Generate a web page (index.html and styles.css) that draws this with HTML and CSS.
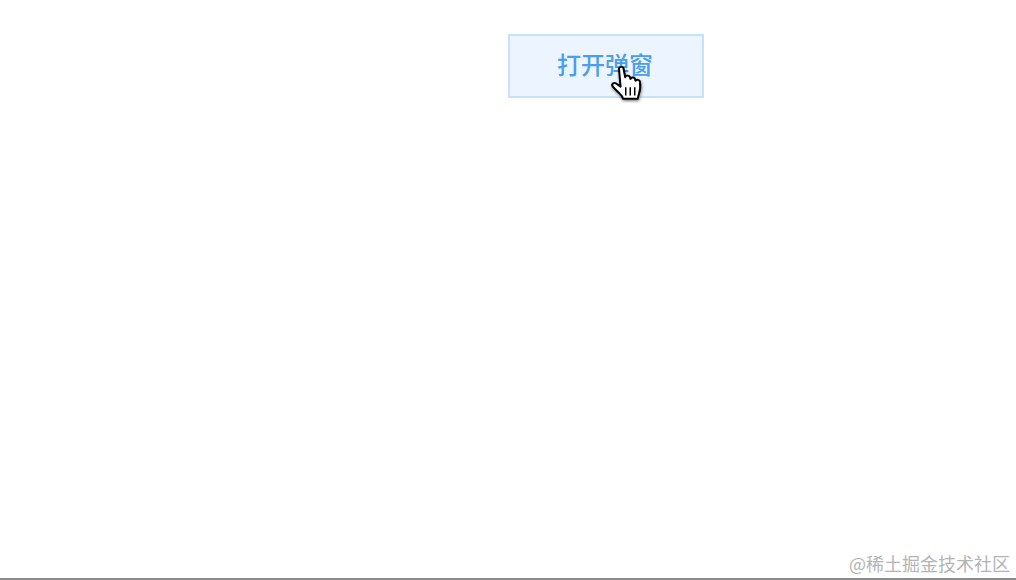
FILE: index.html
```html
<!DOCTYPE html>
<html lang="en">
<head>
    <meta charset="UTF-8">
    <title>打开弹窗</title>
    <link rel="stylesheet" href="styles.css">
</head>
<body>
    <div class="stage">
        <div class="button-wrap">
            <button class="open-button">打开弹窗</button>
            <!-- Mouse pointer caught in the recording -->
            <svg class="hand-cursor" width="36" height="40" viewBox="0 0 32 38" preserveAspectRatio="none">
                <defs>
                    <filter id="cursor-shadow" x="-30%" y="-30%" width="160%" height="160%">
                        <feDropShadow dx="0.5" dy="1.5" stdDeviation="1.2" flood-color="#000" flood-opacity="0.45"/>
                    </filter>
                </defs>
                <path filter="url(#cursor-shadow)" fill="#fff" stroke="#000" stroke-width="1.800" stroke-linejoin="round" d="M8 4.500c0-2.300 3.800-2.300 4.100 0l1.400 8.200c.3-2.300 3.900-2.200 4.300.2l.4 1.300c.5-2 3.900-1.700 4.200.5l.3 1.300c.8-1.700 3.800-1.200 4 1 .4 4.200.1 8.400-.9 11.300-.6 1.800-1 3.100-1.100 4.700H11.600c-.5-2.300-1.700-3.600-3.400-5.300-1.900-1.900-4.300-4.300-5.800-6.400-1.500-2.200 1.100-4.300 3.100-2.800l3.900 3.100z"/>
                <path fill="none" stroke="#000" stroke-width="1.300" d="M14 22v8M18 22v8M22 22v8"/>
            </svg>
        </div>
    </div>
    <div class="watermark">@稀土掘金技术社区</div>
</body>
</html>
```

FILE: styles.css
```css
html,
body {
    margin: 0;
    padding: 0;
    height: 100%;
}

body {
    display: flex;
    flex-direction: column;
    height: 580px;
    box-sizing: border-box;
    overflow: hidden;
    background: #fff;
    border-bottom: 2px solid #8c8c8c;
    font-family: "Noto Sans CJK SC", "Liberation Sans", sans-serif;
}

.stage {
    flex: 1;
    display: flex;
    justify-content: flex-start;
    padding: 34px 0 0 508px;
}

.button-wrap {
    position: relative;
    height: 64px;
}

.open-button {
    width: 196px;
    height: 64px;
    box-sizing: border-box;
    background: #ecf5ff;
    border: 2px solid #c6e2fa;
    color: #4a9eec;
    font-family: inherit;
    font-size: 24px;
    font-weight: 500;
    line-height: 1;
    padding: 0 2px 4px 0;
}

.hand-cursor {
    position: absolute;
    left: 102px;
    top: 30px;
}

.watermark {
    align-self: flex-end;
    padding: 0 6px 3px 0;
    color: #b4b4b4;
    font-family: "Noto Sans CJK SC", sans-serif;
    font-size: 18px;
    line-height: 24px;
}
```
